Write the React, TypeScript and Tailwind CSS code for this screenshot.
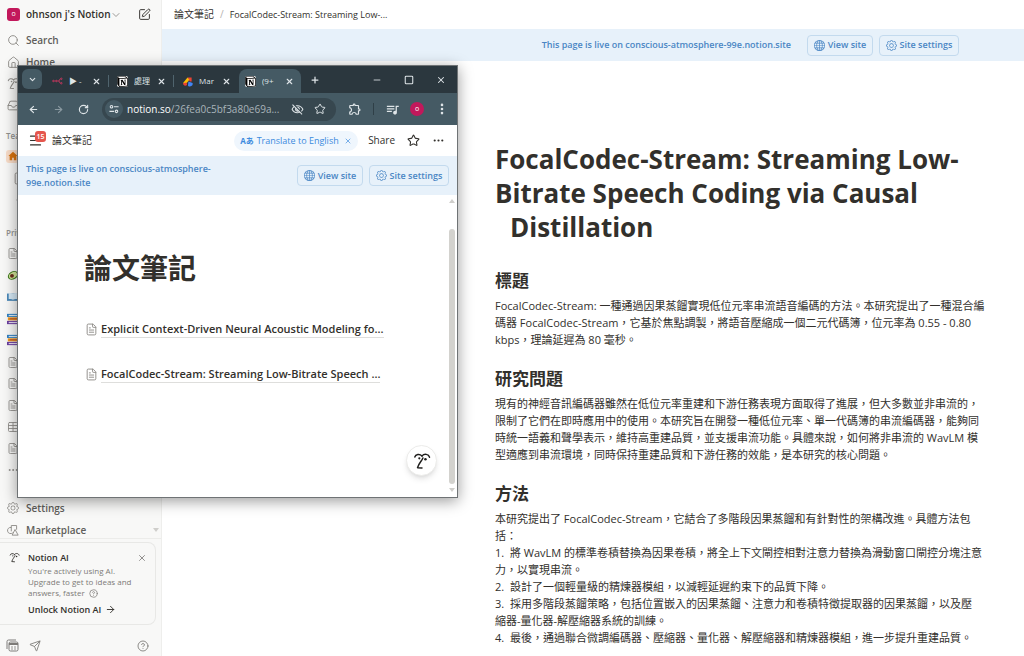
import { ReactNode } from 'react';
import {
  ArrowLeft,
  ArrowRight,
  ChevronDown,
  CircleHelp,
  Ellipsis,
  EllipsisVertical,
  FileText,
  House,
  Inbox,
  Menu,
  Minus,
  Plus,
  RotateCw,
  Search,
  Send,
  Square,
  SquarePen,
  Star,
  Table,
  X,
} from 'lucide-react';
import { BsGear, BsGlobe } from 'react-icons/bs';
import { MdOutlineExtension, MdOutlineVisibilityOff, MdQueueMusic } from 'react-icons/md';
import { SiNotion } from 'react-icons/si';

const sections = [
  {
    title: '標題',
    lines: [
      'FocalCodec-Stream: 一種通過因果蒸餾實現低位元率串流語音編碼的方法。本研究提出了一種混合編',
      '碼器 FocalCodec-Stream，它基於焦點調製，將語音壓縮成一個二元代碼簿，位元率為 0.55 - 0.80',
      'kbps，理論延遲為 80 毫秒。',
    ],
  },
  {
    title: '研究問題',
    lines: [
      '現有的神經音訊編碼器雖然在低位元率重建和下游任務表現方面取得了進展，但大多數並非串流的，',
      '限制了它們在即時應用中的使用。本研究旨在開發一種低位元率、單一代碼簿的串流編碼器，能夠同',
      '時統一語義和聲學表示，維持高重建品質，並支援串流功能。具體來說，如何將非串流的 WavLM 模',
      '型適應到串流環境，同時保持重建品質和下游任務的效能，是本研究的核心問題。',
    ],
  },
  {
    title: '方法',
    lines: [
      '本研究提出了 FocalCodec-Stream，它結合了多階段因果蒸餾和有針對性的架構改進。具體方法包',
      '括：',
      '1.  將 WavLM 的標準卷積替換為因果卷積，將全上下文閘控相對注意力替換為滑動窗口閘控分塊注意',
      '力，以實現串流。',
      '2.  設計了一個輕量級的精煉器模組，以減輕延遲約束下的品質下降。',
      '3.  採用多階段蒸餾策略，包括位置嵌入的因果蒸餾、注意力和卷積特徵提取器的因果蒸餾，以及壓',
      '縮器-量化器-解壓縮器系統的訓練。',
      '4.  最後，通過聯合微調編碼器、壓縮器、量化器、解壓縮器和精煉器模組，進一步提升重建品質。',
    ],
  },
];

function FaceIcon({ className }: { className: string }) {
  return (
    <svg viewBox="0 0 20 20" className={className} fill="none" stroke="currentColor" strokeWidth="1.6" strokeLinecap="round" strokeLinejoin="round">
      <path d="M2 5.6C2.8 2.4 7.4 1.8 10 4.4" />
      <path d="M10 4.4C12.4 1.6 17.4 2 18.4 5.8" />
      <path d="M11 6.6C10 9.6 6.4 12.6 5 17.4L10 17.8" />
      <circle cx="7" cy="7" r="1.2" fill="currentColor" stroke="none" />
      <circle cx="13.8" cy="8" r="1.4" fill="currentColor" stroke="none" />
    </svg>
  );
}

function MarketplaceIcon() {
  return (
    <svg viewBox="0 0 14 14" className="h-[13px] w-[13px]" fill="none" stroke="currentColor" strokeWidth="1.1" strokeLinejoin="round">
      <path d="M5 3.5a3.6 3.6 0 1 0 1.6 6.2" />
      <path d="M5 8V1.2h6.2V6" />
      <path d="M9.4 5.8l3.6 6.6H6z" />
    </svg>
  );
}

function AvocadoIcon() {
  return (
    <svg viewBox="0 0 14 14" className="h-3 w-3">
      <ellipse cx="7" cy="7.4" rx="6.4" ry="4.6" transform="rotate(-32 7 7.4)" fill="#3f7a1d" />
      <ellipse cx="7" cy="7.4" rx="5.1" ry="3.4" transform="rotate(-32 7 7.4)" fill="#d3e59a" />
      <circle cx="5.8" cy="8" r="2.3" fill="#6b2f1c" />
    </svg>
  );
}

function BookIcon() {
  return (
    <svg viewBox="0 0 14 14" className="h-3 w-3">
      <path d="M0 3h14v8.5H0z" fill="#4a88b8" />
      <path d="M2 2.6c2-.4 3.6-.2 5 .6 1.4-.8 3-1 5-.6v6.8c-2-.4-3.6-.2-5 .8-1.4-1-3-1.2-5-.8z" fill="#d5e8f5" />
    </svg>
  );
}

function BooksIcon() {
  return (
    <svg viewBox="0 0 14 14" className="h-3 w-3">
      <path d="M0 1h14v3.6H0z" fill="#2f7fc1" />
      <path d="M2 2.2h12v1.4H2z" fill="#d9e9f5" />
      <path d="M1 5h13v3.6H1z" fill="#f09a23" />
      <path d="M3 6.2h11v1.2H3z" fill="#b9522e" />
      <path d="M0 9.2h14V13H0z" fill="#6b3fa0" />
      <path d="M2 10.4h12v1.4H2z" fill="#e4daf0" />
    </svg>
  );
}

function NodesIcon() {
  return (
    <svg viewBox="0 0 12 8" className="h-2 w-[11px] shrink-0" fill="none" stroke="#c9375f" strokeWidth="1">
      <circle cx="1.5" cy="4" r=".8" />
      <circle cx="4.8" cy="4" r=".8" />
      <path d="M2.5 4h1.3M5.8 4h1.4c1.2 0 .8-2.4 2-2.4M7.2 4c1.2 0 .8 2.4 2 2.4" />
      <circle cx="10.2" cy="1.6" r=".8" />
      <circle cx="10.2" cy="6.4" r=".8" />
    </svg>
  );
}

function CloudIcon() {
  return (
    <svg viewBox="0 0 12 12" className="h-[11px] w-[11px] shrink-0">
      <path d="M6 1.5h4.5V6H8.5z" fill="#ea4335" />
      <path d="M6 1.5L1 8h4l3-4z" fill="#fbbc04" />
      <path d="M1 8a2.6 2.6 0 0 0 4.5 1.8L5 7z" fill="#ea4335" />
      <path d="M7 6l4.5 1.5a3 3 0 0 1-5 3z" fill="#4285f4" />
    </svg>
  );
}

function TuneIcon() {
  return (
    <svg viewBox="0 0 12 12" className="h-[10px] w-[10px]" fill="none" stroke="currentColor" strokeWidth="1.3">
      <circle cx="3" cy="3.2" r="1.5" />
      <path d="M6 3.2h5.5M.5 8.8H6" />
      <circle cx="9" cy="8.8" r="1.5" />
    </svg>
  );
}

function NotionLogo() {
  return (
    <span className="flex h-[11px] w-[11px] shrink-0 items-center justify-center rounded-xs bg-white text-black">
      <SiNotion className="h-[11px] w-[11px]" />
    </span>
  );
}

function BannerButtons() {
  return (
    <div className="flex shrink-0 gap-[6px]">
      <button className="flex h-[21px] w-[66px] items-center justify-center gap-[3px] rounded border border-[#c3daee] text-[9px] font-semibold whitespace-nowrap">
        <BsGlobe className="h-[11px] w-[11px]" />
        View site
      </button>
      <button className="flex h-[21px] w-[80px] items-center justify-center gap-[3px] rounded border border-[#c3daee] text-[9px] font-semibold whitespace-nowrap">
        <BsGear className="h-[11px] w-[11px]" />
        Site settings
      </button>
    </div>
  );
}

function SidebarRow({ icon, label }: { icon: ReactNode; label?: string }) {
  return (
    <a href="#" className="flex flex-1 items-center gap-[7px] px-[7px]">
      <span className="flex w-3 justify-center text-[#8f8d89]">{icon}</span>
      {label && <span className="text-[10px] font-semibold text-[#5f5e5b]">{label}</span>}
    </a>
  );
}

function Sidebar() {
  const page = <FileText className="h-[13px] w-[13px]" strokeWidth={1.75} />;
  return (
    <aside className="flex w-[162px] shrink-0 flex-col border-r border-[#eeeeec] bg-[#f8f8f7]">
      <div className="min-h-0 flex-1 overflow-hidden">
        <div className="flex h-[30px] items-center pr-[10px] pb-px pl-[7px]">
          <span className="flex h-[13px] w-[13px] items-center justify-center rounded-[3px] bg-[#c2185b] text-[7px] text-white">o</span>
          <span className="ml-[6px] text-[10px] font-semibold whitespace-nowrap text-[#32302c]">ohnson j's Notion</span>
          <ChevronDown className="-ml-px h-3 w-3 shrink-0 text-[#8f8d89]" strokeWidth={1.75} />
          <button className="ml-auto text-[#32302c]" aria-label="New page">
            <SquarePen className="h-[13px] w-[13px]" strokeWidth={1.75} />
          </button>
        </div>
        <nav className="flex h-[86px] flex-col">
          <SidebarRow icon={<Search className="h-[13px] w-[13px] shrink-0" strokeWidth={1.75} />} label="Search" />
          <SidebarRow icon={<House className="h-[13px] w-[13px] shrink-0" strokeWidth={1.75} />} label="Home" />
          <SidebarRow icon={<FaceIcon className="h-[13px] w-[13px] shrink-0" />} />
          <SidebarRow icon={<Inbox className="h-[13px] w-[13px] shrink-0" strokeWidth={1.75} />} />
        </nav>
        <h3 className="mt-[11px] flex h-[18px] items-center pl-[6px] text-[8px] font-semibold text-[#91918e]">Teamspaces</h3>
        <div className="flex h-[66px] flex-col">
          <a href="#" className="flex h-[22px] items-center pl-[6px]">
            <span className="flex h-[13px] w-[13px] items-center justify-center rounded-[3px] bg-[#f8dcc8]">
              <svg viewBox="0 0 12 12" className="h-[10px] w-[10px]" fill="#d9730d">
                <path d="M6 1l5.5 5H10v5H7V8H5v3H2V6H.5z" />
              </svg>
            </span>
          </a>
          <a href="#" className="flex h-[22px] items-center pl-[13px] text-[#8f8d89]">{page}</a>
          <a href="#" className="flex h-[22px] items-center pl-[15px] text-[#8f8d89]"><Minus className="h-2 w-2" /></a>
        </div>
        <h3 className="mt-[13px] flex h-[18px] items-center pl-[6px] text-[8px] font-semibold text-[#91918e]">Private</h3>
        <nav className="mt-px flex h-[238px] flex-col">
          <SidebarRow icon={page} />
          <SidebarRow icon={<AvocadoIcon />} />
          <SidebarRow icon={<BookIcon />} />
          <SidebarRow icon={<BooksIcon />} />
          <SidebarRow icon={<BooksIcon />} />
          <SidebarRow icon={page} />
          <SidebarRow icon={page} />
          <SidebarRow icon={page} />
          <SidebarRow icon={<Table className="h-3 w-3" strokeWidth={1.75} />} />
          <SidebarRow icon={page} />
          <SidebarRow icon={<Ellipsis className="h-3 w-3" />} />
        </nav>
        <nav className="mt-4 flex h-11 flex-col">
          <SidebarRow icon={<BsGear className="h-3 w-3" />} label="Settings" />
          <div className="flex flex-1 items-center pr-[2px]">
            <SidebarRow icon={<MarketplaceIcon />} label="Marketplace" />
            <svg viewBox="0 0 6 4" className="h-1 w-[6px]" fill="#cfcecb"><path d="M0 0h6L3 4z" /></svg>
          </div>
        </nav>
      </div>

      <div className="h-[118px] shrink-0 border-t border-[#ececea]">
        <div className="mt-[3px] mr-[5px] flex h-[83px] rounded-r-lg border border-l-0 border-[#e8e8e6] pt-2 pr-2 pl-[9px]">
          <FaceIcon className="mt-px h-[11px] w-[11px] shrink-0 text-[#32302c]" />
          <div className="ml-2 flex-1 whitespace-nowrap">
            <div className="flex h-[13px] items-center justify-between">
              <h4 className="text-[9px] font-semibold text-[#32302c]">Notion AI</h4>
              <button aria-label="Dismiss" className="text-[#7d7b78]"><X className="h-[10px] w-[10px]" /></button>
            </div>
            <p className="mt-px text-[8px] leading-[11px] text-[#7d7b78]">
              You're actively using AI.<br />
              Upgrade to get to ideas and<br />
              answers, faster <CircleHelp className="ml-[2px] inline h-[9px] w-[9px]" />
            </p>
            <a href="#" className="mt-[5px] flex h-[13px] items-center gap-1 text-[9px] font-semibold text-[#32302c]">
              Unlock Notion AI <ArrowRight className="h-[11px] w-[11px]" />
            </a>
          </div>
        </div>
        <div className="mt-[14px] flex items-center pr-3 pl-[6px] text-[#7d7b78]">
          <svg viewBox="0 0 13 13" className="h-[13px] w-[13px]" fill="none" stroke="currentColor">
            <path d="M1 10V2.5A1.5 1.5 0 0 1 2.5 1H10" />
            <rect x="3" y="3" width="9" height="9" rx="1.5" />
            <path d="M3 5h9" strokeWidth="2" />
            <path d="M5 8h5M5 10h5" strokeWidth=".8" strokeDasharray="2 1" />
          </svg>
          <Send className="ml-[10px] h-3 w-3" strokeWidth={1.75} />
          <CircleHelp className="ml-auto h-3 w-3" strokeWidth={1.75} />
        </div>
      </div>
    </aside>
  );
}

function BrowserTab({ icon, label, active }: { icon: ReactNode; label: string; active?: boolean }) {
  return (
    <div className={active ? 'flex h-6 w-[62px] items-center rounded-t-lg bg-[#455a64] pr-[7px] pl-[6px]' : 'flex h-6 w-[65px] items-center pr-2 pl-2'}>
      {icon}
      <span className="ml-[6px] w-4 overflow-hidden text-[8px] whitespace-nowrap">{label}</span>
      <button className="ml-auto" aria-label="Close tab"><X className="h-[9px] w-[9px]" strokeWidth={3} /></button>
    </div>
  );
}

function TabDivider() {
  return <span className="-ml-px h-3 w-px bg-[#50646e]" />;
}

function NoteLink({ children }: { children: ReactNode }) {
  return (
    <a href="#" className="flex h-[17px] items-center gap-[3px] text-[11px] font-semibold text-[#32302c]">
      <FileText className="h-[13px] w-[13px] shrink-0 text-[#8f8d89]" strokeWidth={1.75} />
      <span className="h-[17px] border-b border-[#dededc] leading-4 whitespace-nowrap">{children}</span>
    </a>
  );
}

function BrowserWindow() {
  return (
    <section className="absolute top-[65px] left-[17px] flex h-[433px] w-[441px] flex-col border border-[#6f7375] bg-white shadow-[0_3px_14px_rgba(0,0,0,0.4)]">
      {/* Tab strip */}
      <div className="flex h-[27px] shrink-0 items-end bg-[#2b373e] text-[#dfe5e8]">
        <button className="mr-[2px] mb-1 ml-1 flex h-5 w-5 items-center justify-center rounded-md bg-[#455a64]" aria-label="Search tabs">
          <ChevronDown className="h-[9px] w-[9px]" strokeWidth={3} />
        </button>
        <div className="flex items-center">
          <BrowserTab icon={<NodesIcon />} label="▶ -" />
          <TabDivider />
          <BrowserTab icon={<NotionLogo />} label="處理" />
          <TabDivider />
          <BrowserTab icon={<CloudIcon />} label="Mar" />
          <BrowserTab icon={<NotionLogo />} label="(9+" active />
        </div>
        <button className="mb-2 ml-[9px]" aria-label="New tab"><Plus className="h-[10px] w-[10px]" strokeWidth={3} /></button>
        <div className="mr-[11px] mb-2 ml-auto flex gap-[22px]">
          <button aria-label="Minimize"><Minus className="h-[10px] w-[10px]" /></button>
          <button aria-label="Maximize"><Square className="h-[10px] w-[10px]" strokeWidth={2.5} /></button>
          <button aria-label="Close"><X className="h-[10px] w-[10px]" strokeWidth={2.5} /></button>
        </div>
      </div>

      {/* Toolbar */}
      <div className="flex h-8 shrink-0 items-center bg-[#455a64] pr-2 pl-[10px] text-[#dfe5e8]">
        <div className="flex gap-[14px]">
          <button aria-label="Back"><ArrowLeft className="h-[11px] w-[11px]" strokeWidth={2.5} /></button>
          <button aria-label="Forward" className="text-[#8b9aa1]"><ArrowRight className="h-[11px] w-[11px]" strokeWidth={2.5} /></button>
          <button aria-label="Reload"><RotateCw className="h-[11px] w-[11px]" strokeWidth={2.5} /></button>
        </div>
        <div className="ml-[13px] flex h-[23px] w-[234px] items-center rounded-full bg-[#37474f] pr-[10px] pl-[3px]">
          <span className="flex h-[18px] w-[18px] shrink-0 items-center justify-center rounded-full bg-[#455a64]"><TuneIcon /></span>
          <span className="ml-1 flex-1 text-[10px] whitespace-nowrap text-[#a9b4ba]"><span className="text-white">notion.so</span>/26fea0c5bf3a80e69a...</span>
          <MdOutlineVisibilityOff className="h-[13px] w-[13px] shrink-0" />
          <Star className="ml-[10px] h-3 w-3 shrink-0" />
        </div>
        <MdOutlineExtension className="ml-3 h-[14px] w-[14px]" />
        <span className="ml-[11px] h-3 w-px bg-[#2f3f47]" />
        <MdQueueMusic className="ml-[11px] h-[15px] w-[15px]" />
        <span className="ml-[10px] flex h-[14px] w-[14px] items-center justify-center rounded-full bg-[#c2185b] text-[7px] text-white">o</span>
        <button className="ml-auto" aria-label="Browser menu"><EllipsisVertical className="h-[14px] w-[14px]" strokeWidth={2.5} /></button>
      </div>

      {/* Page header */}
      <header className="flex h-[31px] shrink-0 items-center pr-3 pl-[10px] text-[#32302c]">
        <button className="relative" aria-label="Open sidebar">
          <Menu className="h-[15px] w-[15px]" strokeWidth={1.75} />
          <span className="absolute -top-[2px] left-[7px] flex h-[11px] w-[11px] items-center justify-center rounded-[3px] bg-[#e5564d] text-[7px] leading-none font-semibold text-white">15</span>
        </button>
        <span className="ml-[9px] text-[10px]">論文筆記</span>
        <div className="ml-auto flex h-5 w-[124px] items-center rounded-full bg-[#eff6fd] px-[6px] text-[9px] whitespace-nowrap text-[#3b8ade]">
          <span className="text-[8px] font-bold">Aあ</span>
          <span className="ml-[3px]">Translate to English</span>
          <button className="ml-auto" aria-label="Dismiss translation"><X className="h-2 w-2" /></button>
        </div>
        <button className="ml-[10px] text-[10px]">Share</button>
        <button className="ml-3" aria-label="Favorite"><Star className="h-[13px] w-[13px]" /></button>
        <button className="ml-3" aria-label="More"><Ellipsis className="h-[13px] w-[13px]" /></button>
      </header>

      <div className="flex h-[39px] shrink-0 items-center justify-between bg-[#e7f1fa] pr-2 pl-2 text-[#4a86c4]">
        <p className="text-[9px] leading-[14px] font-semibold whitespace-nowrap">
          This page is live on conscious-atmosphere-<br />99e.notion.site
        </p>
        <BannerButtons />
      </div>

      {/* Page body */}
      <div className="flex min-h-0 flex-1">
        <div className="relative flex-1 pt-[53px] pl-[66px]">
          <h1 className="text-[28px] leading-10 font-bold text-[#32302c]">論文筆記</h1>
          <div className="mt-[33px] flex flex-col gap-7 pl-px">
            <NoteLink>Explicit Context-Driven Neural Acoustic Modeling fo...</NoteLink>
            <NoteLink>FocalCodec-Stream: Streaming Low-Bitrate Speech ...</NoteLink>
          </div>
          <button className="absolute right-[10px] bottom-[21px] flex h-[31px] w-[31px] items-center justify-center rounded-full border border-[#ececea] bg-white text-[#1f1e1c] shadow-md" aria-label="Notion AI">
            <FaceIcon className="h-[18px] w-[18px]" />
          </button>
        </div>
        <div className="flex w-[10px] flex-col items-center pt-1 pb-[5px]">
          <svg viewBox="0 0 6 4" className="h-1 w-[6px] shrink-0" fill="#cfcecb"><path d="M0 4h6L3 0z" /></svg>
          <span className="mt-[26px] mb-1 w-[6px] flex-1 rounded-full bg-[#d3d2ce]" />
          <svg viewBox="0 0 6 4" className="h-1 w-[6px] shrink-0" fill="#cfcecb"><path d="M0 0h6L3 4z" /></svg>
        </div>
      </div>
    </section>
  );
}

export default function App() {
  return (
    <div lang="zh-Hant" className="relative flex h-screen overflow-hidden bg-white font-['Open_Sans','Noto_Sans_CJK_TC',sans-serif]">
      <Sidebar />

      <main className="min-w-0 flex-1">
        <header className="flex h-[29px] items-center gap-[6px] pl-3 text-[#32302c]">
          <a href="#" className="text-[10px]">論文筆記</a>
          <span className="text-[10px] text-[#b5b3af]">/</span>
          <a href="#" className="text-[9px]">FocalCodec-Stream: Streaming Low-...</a>
        </header>
        <div className="flex h-8 items-center justify-end gap-4 bg-[#e7f1fa] pr-[65px] text-[#4a86c4]">
          <p className="text-[9px] font-semibold whitespace-nowrap">This page is live on conscious-atmosphere-99e.notion.site</p>
          <BannerButtons />
        </div>

        <article className="pt-[81px] pl-[333px] whitespace-pre text-[#32302c]">
          <h1 className="mb-[25px] text-[26px] leading-[34px] font-bold">
            <span className="block">FocalCodec-Stream: Streaming Low-</span>
            <span className="block">Bitrate Speech Coding via Causal</span>
            <span className="block pl-[15px]">Distillation</span>
          </h1>
          {sections.map((section) => (
            <section key={section.title} className="mb-[19px]">
              <h2 className="mb-1 text-[17px] leading-6 font-bold">{section.title}</h2>
              <div className="text-[11px] leading-[17px]">
                {section.lines.map((line) => (
                  <p key={line}>{line}</p>
                ))}
              </div>
            </section>
          ))}
        </article>
      </main>

      <BrowserWindow />
    </div>
  );
}
